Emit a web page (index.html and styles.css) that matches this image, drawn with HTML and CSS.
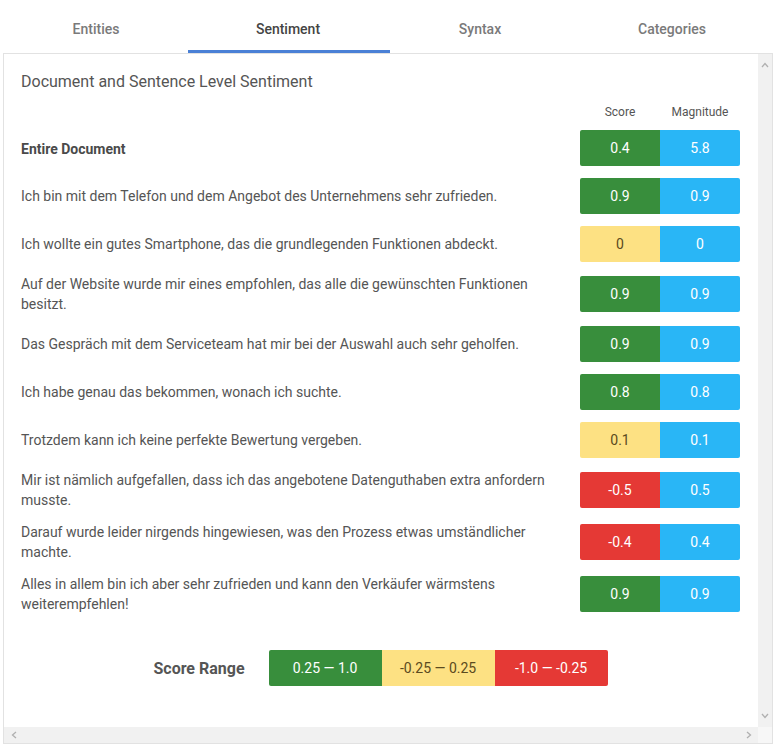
FILE: index.html
```html
<!DOCTYPE html>
<html lang="de">
<head>
<meta charset="utf-8">
<title>Sentiment</title>
<link rel="stylesheet" href="styles.css">
</head>
<body>
<nav class="tabs">
  <div class="tab">Entities</div>
  <div class="tab active">Sentiment</div>
  <div class="tab">Syntax</div>
  <div class="tab">Categories</div>
</nav>
<section class="panel">
  <div class="content">
    <h1 class="title">Document and Sentence Level Sentiment</h1>
    <div class="head">
      <span class="col">Score</span>
      <span class="col">Magnitude</span>
    </div>
    <div class="rows">
      <div class="row">
        <div class="text strong">Entire Document</div>
        <div class="box pos">0.4</div><div class="box mag">5.8</div>
      </div>
      <div class="row">
        <div class="text">Ich bin mit dem Telefon und dem Angebot des Unternehmens sehr zufrieden.</div>
        <div class="box pos">0.9</div><div class="box mag">0.9</div>
      </div>
      <div class="row">
        <div class="text">Ich wollte ein gutes Smartphone, das die grundlegenden Funktionen abdeckt.</div>
        <div class="box neu">0</div><div class="box mag">0</div>
      </div>
      <div class="row">
        <div class="text">Auf der Website wurde mir eines empfohlen, das alle die gewünschten Funktionen besitzt.</div>
        <div class="box pos">0.9</div><div class="box mag">0.9</div>
      </div>
      <div class="row">
        <div class="text">Das Gespräch mit dem Serviceteam hat mir bei der Auswahl auch sehr geholfen.</div>
        <div class="box pos">0.9</div><div class="box mag">0.9</div>
      </div>
      <div class="row">
        <div class="text">Ich habe genau das bekommen, wonach ich suchte.</div>
        <div class="box pos">0.8</div><div class="box mag">0.8</div>
      </div>
      <div class="row">
        <div class="text">Trotzdem kann ich keine perfekte Bewertung vergeben.</div>
        <div class="box neu">0.1</div><div class="box mag">0.1</div>
      </div>
      <div class="row">
        <div class="text">Mir ist nämlich aufgefallen, dass ich das angebotene Datenguthaben extra anfordern musste.</div>
        <div class="box neg">-0.5</div><div class="box mag">0.5</div>
      </div>
      <div class="row">
        <div class="text">Darauf wurde leider nirgends hingewiesen, was den Prozess etwas umständlicher machte.</div>
        <div class="box neg">-0.4</div><div class="box mag">0.4</div>
      </div>
      <div class="row">
        <div class="text">Alles in allem bin ich aber sehr zufrieden und kann den Verkäufer wärmstens weiterempfehlen!</div>
        <div class="box pos">0.9</div><div class="box mag">0.9</div>
      </div>
    </div>
    <div class="legend">
      <span class="legend-label">Score Range</span>
      <div class="legend-boxes">
        <div class="lbox pos">0.25 — 1.0</div>
        <div class="lbox neu">-0.25 — 0.25</div>
        <div class="lbox neg">-1.0 — -0.25</div>
      </div>
    </div>
  </div>
  <div class="vscroll">
    <svg class="arrow" width="8" height="6" viewBox="0 0 8 6"><path d="M1 5 L4 1.5 L7 5" fill="none" stroke="#b0b0b0" stroke-width="1.3"/></svg>
    <svg class="arrow" width="8" height="6" viewBox="0 0 8 6"><path d="M1 1 L4 4.5 L7 1" fill="none" stroke="#b0b0b0" stroke-width="1.3"/></svg>
  </div>
  <div class="hscroll">
    <svg class="arrow" width="6" height="8" viewBox="0 0 6 8"><path d="M5 1 L1.5 4 L5 7" fill="none" stroke="#b0b0b0" stroke-width="1.3"/></svg>
    <svg class="arrow" width="6" height="8" viewBox="0 0 6 8"><path d="M1 1 L4.5 4 L1 7" fill="none" stroke="#b0b0b0" stroke-width="1.3"/></svg>
  </div>
  <div class="corner"></div>
</section>
</body>
</html>
```
FILE: styles.css
```css
* { box-sizing: border-box; }
html, body { margin: 0; padding: 0; background: #fff; }
body {
  font-family: Roboto, "Liberation Sans", Arial, sans-serif;
  color: #555;
  width: 779px;
  height: 748px;
  overflow: hidden;
}
.tabs {
  display: flex;
  width: 768px;
  height: 53px;
}
.tab {
  flex: 1;
  display: flex;
  align-items: center;
  justify-content: center;
  padding-top: 5px;
  font-size: 14px;
  font-weight: 500;
  color: #7a7a7a;
  position: relative;
}
.tab.active { color: #444; }
.tab.active::after {
  content: "";
  position: absolute;
  left: -4px;
  right: -6px;
  bottom: 0;
  height: 3px;
  background: #4a80d6;
}
.panel {
  margin-left: 3px;
  width: 770px;
  height: 691px;
  border: 1px solid #e2e2e2;
  display: grid;
  grid-template-columns: 1fr 14px;
  grid-template-rows: 1fr 16px;
}
.content {
  padding: 18px 18px 0 17px;
  overflow: hidden;
}
.title {
  margin: 0;
  font-size: 16px;
  font-weight: 400;
  line-height: 20px;
  color: #555;
}
.head {
  display: flex;
  justify-content: flex-end;
  margin-top: 12px;
  height: 16px;
  line-height: 16px;
}
.col {
  width: 80px;
  text-align: center;
  font-size: 12px;
  color: #555;
}
.rows {
  display: flex;
  flex-direction: column;
  gap: 12px;
  margin-top: 10px;
}
.row {
  display: flex;
  align-items: center;
  min-height: 36px;
}
.text {
  flex: 1;
  padding-right: 20px;
  font-size: 14px;
  line-height: 20px;
  color: #555;
}
.text.strong { font-weight: 700; color: #4a4a4a; padding-top: 2px; }
.box {
  width: 80px;
  height: 36px;
  display: flex;
  align-items: center;
  justify-content: center;
  font-size: 14px;
  color: #fff;
}
.box:nth-child(2) { border-radius: 2px 0 0 2px; }
.box.mag { border-radius: 0 2px 2px 0; background: #29b6f6; }
.pos { background: #388e3c; color: #fff; }
.neu { background: #fde183; color: #5b4a20; }
.neg { background: #e53935; color: #fff; }
.legend {
  display: flex;
  align-items: center;
  justify-content: center;
  gap: 24px;
  margin-top: 36px;
}
.legend-label {
  font-size: 16px;
  font-weight: 700;
  color: #555;
}
.legend-boxes {
  display: flex;
  border-radius: 2px;
  overflow: hidden;
}
.lbox {
  width: 113px;
  height: 36px;
  display: flex;
  align-items: center;
  justify-content: center;
  font-size: 14px;
}
.vscroll {
  background: #f1f1f1;
  display: flex;
  flex-direction: column;
  justify-content: space-between;
  align-items: center;
  padding: 8px 0 8px;
}
.hscroll {
  background: #f1f1f1;
  display: flex;
  justify-content: space-between;
  align-items: center;
  padding: 0 6px 0 7px;
}
.corner { background: #f7f7f7; }
.arrow { display: block; }
```
